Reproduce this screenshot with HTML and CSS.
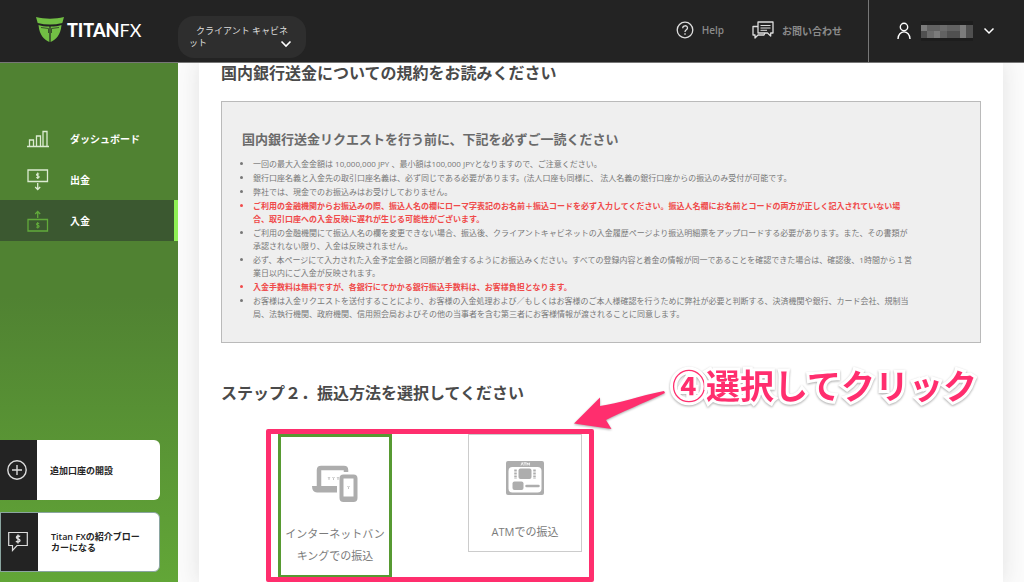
FILE: index.html
```html
<!DOCTYPE html>
<html lang="ja">
<head>
<meta charset="utf-8">
<meta name="viewport" content="width=device-width, initial-scale=1">
<title>Titan FX</title>
<link rel="stylesheet" href="styles.css">
</head>
<body>
<header class="topbar">
  <a class="logo" href="#">
    <svg width="28" height="26" viewBox="0 0 28 26" aria-hidden="true">
      <g fill="#72bf44">
        <path d="M0 0C9 2.200 19 2.200 28 0L26.300 6C18 8 10 8 1.700 6Z"/>
        <path d="M2.500 8C6 9.200 9 9.500 13.400 9.500V25C8 22.500 3.500 18.500 2.500 8Z"/>
        <path d="M25.500 8C22 9.200 19 9.500 14.600 9.500V25C20 22.500 24.500 18.500 25.500 8Z"/>
      </g>
      <path d="M5 10.500L12.500 11.500V16M23 10.500L15.500 11.500V16" fill="none" stroke="#232323" stroke-width=".7"/>
    </svg>
    <span class="logo-text"><b>TITAN</b>FX</span>
  </a>
  <button class="switcher" type="button">
    <span class="switcher-label">クライアント キャビネット</span>
    <svg class="switcher-arrow" width="12" height="8" viewBox="0 0 12 8" aria-hidden="true"><path d="M1.500 1.500L6 6L10.500 1.500" fill="none" stroke="#fff" stroke-width="1.600"/></svg>
  </button>
  <nav class="toplinks">
    <a class="toplink" href="#">
      <svg width="18" height="18" viewBox="0 0 18 18" fill="none" stroke="#ddd" aria-hidden="true">
        <circle cx="9" cy="9" r="7.800" stroke-width="1.300"/>
        <path d="M6.700 7.200C6.700 4 11.500 4 11.500 7C11.500 8.800 9 8.800 9 11" stroke-width="1.300"/>
        <path d="M9 12.300V13.800" stroke-width="1.400"/>
      </svg>
      Help
    </a>
    <a class="toplink" href="#">
      <svg width="22" height="18" viewBox="0 0 22 18" fill="none" stroke="#ddd" stroke-width="1.300" stroke-linejoin="round" aria-hidden="true">
        <path d="M6 1H21V12H18.700V15L15.500 12H6Z"/>
        <path d="M6 5.500H1V14H3V17L6 14H12L13 12"/>
        <path d="M8.500 4.500H18.500M8.500 7H18.500M8.500 9.300H15" stroke-width="1"/>
      </svg>
      お問い合わせ
    </a>
  </nav>
  <button class="account" type="button" aria-label="アカウント">
    <svg width="14" height="18" viewBox="0 0 14 18" fill="none" stroke="#fff" stroke-width="1.400" aria-hidden="true">
      <circle cx="7" cy="5" r="3.700"/><path d="M1 17C1 7.500 13 7.500 13 17"/>
    </svg>
    <svg width="52" height="20" viewBox="0 0 52 20" aria-hidden="true">
      <rect width="52" height="20" fill="#1d1d1d"/>
      <rect y="4" width="52" height="13" fill="#626262"/>
      <path d="M0 4H6V10H0ZM13 10H19V17H13ZM39 4H45V17H39Z" fill="#7c7c7c"/>
      <path d="M6 10H13V17H6ZM19 4H26V10H19Z" fill="#6c6c6c"/>
      <path d="M0 10H6V17H0ZM26 10H39V17H26ZM45 4H52V17H45Z" fill="#505050"/>
    </svg>
    <svg width="12" height="8" viewBox="0 0 12 8" aria-hidden="true"><path d="M1.500 1.500L6 6L10.500 1.500" fill="none" stroke="#fff" stroke-width="1.500"/></svg>
  </button>
</header>

<div class="layout">
  <aside class="sidebar">
    <nav class="menu">
      <a class="menu-item" href="#">
        <svg width="22" height="22" viewBox="0 0 22 22" fill="none" stroke="#dcebd2" aria-hidden="true">
          <path d="M0 18.500H22M2.500 18V12H6.500V18M9.500 18V8H13.500V18M16 18V3.500H20V18" stroke-width="1.300"/>
        </svg>
        ダッシュボード
      </a>
      <a class="menu-item" href="#">
        <svg width="22" height="22" viewBox="0 0 22 22" fill="none" stroke="#dcebd2" aria-hidden="true">
          <path d="M1 1H20.500V12.500H1Z" stroke-width="1.300"/>
          <path d="M12.200 5C9 4 9 6.500 10.700 6.700C13 7 12.500 9.700 9.200 8.600M10.700 3.500V10" stroke-width="1.100"/>
          <path d="M10.700 14V20M8.200 18L10.700 20.500L13.200 18" stroke-width="1.300"/>
        </svg>
        出金
      </a>
      <a class="menu-item menu-item-active" href="#" aria-current="page">
        <svg width="22" height="22" viewBox="0 0 22 22" fill="none" stroke="#62aa3b" aria-hidden="true">
          <path d="M1 9.500H20.500V21H1Z" stroke-width="1.300"/>
          <path d="M12.200 13.500C9 12.500 9 15 10.700 15.200C13 15.500 12.500 18.200 9.200 17.100M10.700 12V18.500" stroke-width="1.100"/>
          <path d="M10.700 8V1.500M8.200 4L10.700 1.500L13.200 4" stroke-width="1.300"/>
        </svg>
        入金
      </a>
    </nav>
    <div class="promos">
      <a class="promo" href="#">
        <span class="promo-icon">
          <svg width="20" height="20" viewBox="0 0 20 20" fill="none" stroke="#ddd" stroke-width="1.400" aria-hidden="true"><circle cx="10" cy="10" r="9.200"/><path d="M10 5V15M5 10H15"/></svg>
        </span>
        <span class="promo-text">追加口座の開設</span>
      </a>
      <a class="promo promo-outlined" href="#">
        <span class="promo-icon">
          <svg width="20" height="22" viewBox="0 0 20 22" fill="none" stroke="#ddd" aria-hidden="true">
            <path d="M.700 1.500H19.300V14.500H9L4.500 19.500V14.500H.700Z" stroke-width="1.200"/>
            <path d="M12.200 5.500C8.500 3.800 7.200 7 10 7.800C13.500 8.800 12 12 7.800 10.400M10 3.500V12.500" stroke-width="1.400"/>
          </svg>
        </span>
        <span class="promo-text">Titan FXの紹介ブローカーになる</span>
      </a>
    </div>
  </aside>

  <main class="content">
    <div class="panel">
      <h2 class="title">国内銀行送金についての規約をお読みください</h2>
      <section class="terms">
        <h3 class="terms-title">国内銀行送金リクエストを行う前に、下記を必ずご一読ください</h3>
        <ul class="terms-list">
          <li>一回の最大入金金額は 10,000,000 JPY 、最小額は100,000 JPYとなりますので、ご注意ください。</li>
          <li>銀行口座名義と入金先の取引口座名義は、必ず同じである必要があります。(法人口座も同様に、 法人名義の銀行口座からの振込のみ受付が可能です。</li>
          <li>弊社では、現金でのお振込みはお受けしておりません。</li>
          <li class="important">ご利用の金融機関からお振込みの際、振込人名の欄にローマ字表記のお名前＋振込コードを必ず入力してください。振込人名欄にお名前とコードの両方が正しく記入されていない場<br>合、取引口座への入金反映に遅れが生じる可能性がございます。</li>
          <li>ご利用の金融機関にて振込人名の欄を変更できない場合、振込後、クライアントキャビネットの入金履歴ページより振込明細票をアップロードする必要があります。また、その書類が<br>承認されない限り、入金は反映されません。</li>
          <li>必ず、本ページにて入力された入金予定金額と同額が着金するようにお振込みください。すべての登録内容と着金の情報が同一であることを確認できた場合は、確認後、1時間から１営<br>業日以内にご入金が反映されます。</li>
          <li class="important">入金手数料は無料ですが、各銀行にてかかる銀行振込手数料は、お客様負担となります。</li>
          <li>お客様は入金リクエストを送付することにより、お客様の入金処理および／もしくはお客様のご本人様確認を行うために弊社が必要と判断する、決済機関や銀行、カード会社、規制当<br>局、法執行機関、政府機関、信用照会局およびその他の当事者を含む第三者にお客様情報が渡されることに同意します。</li>
        </ul>
      </section>
      <h2 class="title title-step">ステップ２．振込方法を選択してください</h2>
      <div class="methods">
        <button class="method method-selected" type="button" aria-pressed="true">
          <svg width="46" height="38" viewBox="0 0 46 38" aria-hidden="true">
            <path d="M7 21V5Q7 3 9 3H32Q34 3 34 5V7" fill="none" stroke="#adadad" stroke-width="4.500"/>
            <path d="M0 21H25V27.500H5Q0 27 0 21Z" fill="#adadad"/>
            <rect x="29.500" y="11.500" width="14" height="23.500" rx="2" fill="#fff" stroke="#adadad" stroke-width="4"/>
            <path d="M29 33.500H44" stroke="#adadad" stroke-width="4"/>
            <path d="M16 12L17 13.500L18 12M17 13.500V15M20.500 12L21.500 13.500L22.500 12M21.500 13.500V15M25 12L26 13.500L27 12M26 13.500V15M35.500 21L36.500 22.500L37.500 21M36.500 22.500V24" fill="none" stroke="#bbb" stroke-width=".9"/>
          </svg>
          <span class="method-label">インターネットバンキングでの振込</span>
        </button>
        <button class="method" type="button" aria-pressed="false">
          <svg width="38" height="34" viewBox="0 0 38 34" aria-hidden="true">
            <rect width="38" height="34" rx="2" fill="#adadad"/>
            <rect x="2.500" y="6" width="33" height="25.500" rx="4" fill="#fff"/>
            <rect x="12.500" y="7.500" width="13" height="10.500" rx="2" fill="#adadad"/>
            <path d="M9.500 8.500V18M28.500 8.500V18" stroke="#adadad" stroke-width="2.500" stroke-dasharray="2 1"/>
            <rect x="6.500" y="20.500" width="11" height="8.500" rx="2" fill="#adadad"/>
            <path d="M20.500 25H32.500" stroke="#adadad" stroke-width="2.500" stroke-linecap="round"/>
            <path d="M15 4.500L16.200 1.500L17.400 4.500M17.500 1.800H20.500M19 1.800V4.500M21 4.500V1.800L22.200 3.500L23.400 1.800V4.500" fill="none" stroke="#fff" stroke-width=".8"/>
          </svg>
          <span class="method-label">ATMでの振込</span>
        </button>
        <div class="marker"></div>
        <svg class="arrow" width="98" height="40" viewBox="0 0 98 40" aria-hidden="true">
          <path d="M0 32.500L26 6.500V15C45 12.500 65 5 90 0L91 2C70 12 45 22 32 29L37.500 38Z" fill="#ff2e6e"/>
        </svg>
        <p class="callout"><span class="callout-number">④</span>選択してクリック</p>
      </div>
    </div>
  </main>
</div>
</body>
</html>
```
FILE: styles.css
```css
* {
  box-sizing: border-box;
}

body {
  display: flex;
  flex-direction: column;
  min-height: 100vh;
  margin: 0;
  padding-bottom: 1px;
  background: #fff;
  color: #4a4a4a;
  font-family: "Open Sans", "Noto Sans CJK JP", sans-serif;
}

button {
  margin: 0;
  padding: 0;
  border: 0;
  background: none;
  color: inherit;
  font-family: inherit;
  cursor: pointer;
}

a {
  color: inherit;
  text-decoration: none;
}

svg {
  display: block;
  flex: none;
}

/* Top bar */
.topbar {
  display: flex;
  align-items: center;
  height: 63px;
  border-bottom: 1px solid #777;
  background: #232323;
}

.logo {
  display: flex;
  align-items: center;
  gap: 3px;
  width: 142px;
  margin-right: 36px;
  padding: 0 0 2px 36px;
}

.logo-text {
  color: #fff;
  font: 400 18px/20px Lato, sans-serif;
}

.logo-text b {
  font-weight: 900;
}

.switcher {
  position: relative;
  width: 128px;
  height: 42px;
  margin-top: 12px;
  padding: 0 11px;
  border-radius: 16px;
  background: #2e2e2e;
  color: #ddd;
  font-size: 9px;
  line-height: 12px;
  text-align: left;
  text-indent: 7px;
}

.switcher-label {
  display: block;
  word-break: break-all;
}

.switcher-arrow {
  position: absolute;
  right: 14px;
  bottom: 10px;
}

.toplinks {
  display: flex;
  gap: 28px;
  margin-left: auto;
  padding: 0 26px 2px 0;
}

.toplink {
  display: flex;
  align-items: center;
  gap: 8px;
  color: #8a8a8a;
  font-size: 10px;
  font-weight: 600;
}

.account {
  display: flex;
  align-items: center;
  gap: 10px;
  height: 100%;
  padding: 0 29px 0 28px;
  border-left: 1px solid #777;
}

/* Page body */
.layout {
  display: flex;
  flex: 1;
}

.sidebar {
  display: flex;
  flex: none;
  flex-direction: column;
  width: 178px;
  padding: 55px 0 10px;
  background: linear-gradient(#508232 45%, #62a637);
}

.menu-item {
  display: flex;
  align-items: center;
  gap: 21px;
  height: 41px;
  padding-left: 27px;
  color: #fff;
  font-size: 10px;
  font-weight: 700;
}

.menu-item-active {
  border-right: 4px solid #8ff055;
  background: #3b5830;
}

.promos {
  display: flex;
  flex-direction: column;
  gap: 12px;
  margin-top: auto;
  padding-right: 18px;
}

.promo {
  display: flex;
  height: 60px;
  overflow: hidden;
  border-radius: 0 6px 6px 0;
  background: #fff;
  color: #232323;
  font-size: 9px;
  font-weight: 600;
  line-height: 11px;
}

.promo-outlined {
  border: 1px solid #8aa5a0;
}

.promo-icon {
  display: flex;
  flex: none;
  align-items: center;
  justify-content: center;
  width: 37px;
  padding-right: 3px;
  background: #232323;
}

.promo-text {
  align-self: center;
  padding: 0 16px 0 13px;
}

.content {
  flex: 1;
  min-width: 0;
  padding: 0 21px;
  overflow: hidden;
  background: #fbfbfb;
}

.panel {
  height: 100%;
  padding: 0 22px;
  background: #fff;
  box-shadow: 0 0 20px #e2e2e2;
}

.title {
  margin: 0;
  font-size: 16px;
  font-weight: 600;
  line-height: 20px;
}

.title-step {
  margin-top: 40px;
}

.terms {
  margin-top: 18px;
  padding: 27px 20px 22px;
  border: 1px solid #bababa;
  background: #efefef;
}

.terms-title {
  margin: 0 0 8px;
  color: #6a6a6a;
  font-size: 13px;
  font-weight: 600;
  line-height: 20px;
}

.terms-list {
  display: flex;
  flex-direction: column;
  gap: 1px;
  margin: 0;
  padding-left: 11px;
  color: #777;
  font-size: 8px;
  line-height: 13px;
}

.important {
  color: #f04a4a;
  font-weight: 600;
}

/* Transfer methods */
.methods {
  position: relative;
  display: flex;
  align-items: flex-start;
  gap: 76px;
  margin-top: 31px;
  padding-left: 57px;
}

.method {
  display: flex;
  flex-direction: column;
  align-items: center;
  width: 114px;
  padding: 26px 3px 8px;
  border: 1px solid #ccc;
  background: #fff;
  color: #7b7b7b;
  font-size: 11px;
  line-height: 22px;
}

.method-selected {
  padding: 28px 2px 8px;
  border: 3px solid #579a32;
}

.method-label {
  margin-top: 26px;
}

.method-selected .method-label {
  margin-top: 20px;
}

/* Step annotation laid over the methods */
.marker {
  position: absolute;
  top: -5px;
  left: 45px;
  width: 328px;
  height: 153px;
  border: 5px solid #ff2e6e;
  border-radius: 2px;
  pointer-events: none;
}

.arrow {
  position: absolute;
  top: -43px;
  left: 353px;
  filter: drop-shadow(0 1px 1px #aaa);
}

.callout {
  position: absolute;
  top: -73px;
  left: 451px;
  margin: 0;
  color: #ff2e6e;
  font-family: "Noto Sans CJK JP", sans-serif;
  font-size: 34px;
  font-weight: 700;
  line-height: 48px;
  white-space: nowrap;
  filter: drop-shadow(0 1px 1px #aaa);
  -webkit-text-stroke: 6px #fff;
  paint-order: stroke fill;
}
```
